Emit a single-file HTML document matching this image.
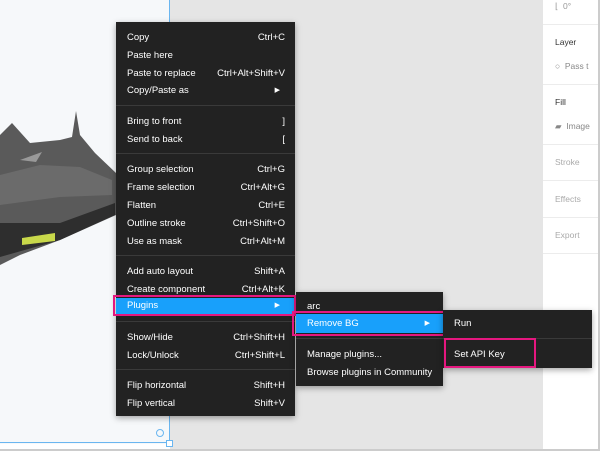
<!DOCTYPE html>
<html><head><style>
body{margin:0;width:600px;height:451px;overflow:hidden;font-family:"Liberation Sans",sans-serif;background:#fff;position:relative}
.abs{position:absolute}
.menu{position:absolute;background:#222;box-shadow:0 2px 6px rgba(0,0,0,.35);color:#fff;font-size:9.5px}
.it{position:absolute;left:11px;right:10px;height:16px;line-height:16px}
.it span{position:absolute;right:0;top:0}
.sep{position:absolute;left:0;right:0;height:1px;background:#3a3a3a}
.hl{background:#18a0fb}
.pink{position:absolute;border:2px solid #e5177f;box-sizing:border-box}
.rp{position:absolute;left:555px;font-size:8.5px}
.rs{position:absolute;left:543px;width:55px;height:1px;background:#ececec}
</style></head><body>
<div class="abs" style="left:0;top:0;width:170px;height:444px;background:#f6f8fa"></div>
<div class="abs" style="left:170px;top:0;width:373px;height:449px;background:#e5e5e5"></div>
<div class="abs" style="left:543px;top:0;width:55px;height:449px;background:#fff"></div>
<div class="abs" style="left:598px;top:0;width:2px;height:451px;background:#ccc"></div>
<div class="abs" style="left:0;top:449px;width:600px;height:2px;background:#ccc"></div>
<div class="abs" style="left:169px;top:0;width:1px;height:444px;background:#6ab6f0"></div>
<div class="abs" style="left:0;top:442px;width:170px;height:1px;background:#6ab6f0"></div>
<div class="abs" style="left:166px;top:440px;width:5px;height:5px;border:1px solid #6ab6f0;background:#fff"></div>
<div class="abs" style="left:156px;top:429px;width:6px;height:6px;border:1px solid #6ab6f0;border-radius:50%"></div>
<svg class="abs" style="left:0;top:105px" width="120" height="165">
<path d="M0 30 L12 18 L30 38 L60 35 L72 32 L76 6 L80 30 L95 48 L116 68 L116 110 L60 135 L20 150 L0 160 Z" fill="#5a5a5a"/>
<path d="M0 70 L40 60 L80 62 L112 75 L112 90 L60 92 L0 100Z" fill="#777" opacity=".6"/>
<path d="M0 118 L60 118 L115 98 L115 110 L60 135 L0 152Z" fill="#2e2e2e"/>
<path d="M22 133 L55 128 L55 136 L22 140Z" fill="#c8d84a"/>
<path d="M20 55 L42 47 L36 57Z" fill="#999"/>
</svg>
<!-- right panel -->
<div class="rs" style="top:24px"></div><div class="rs" style="top:84px"></div><div class="rs" style="top:144px"></div><div class="rs" style="top:180px"></div><div class="rs" style="top:217px"></div><div class="rs" style="top:253px"></div>
<div class="rp" style="top:1px;color:#999">⌊&nbsp; 0°</div>
<div class="rp" style="top:37px;color:#333">Layer</div>
<div class="rp" style="top:61px;color:#888">○&nbsp; Pass t</div>
<div class="rp" style="top:97px;color:#333">Fill</div>
<div class="rp" style="top:121px;color:#888">▰&nbsp; Image</div>
<div class="rp" style="top:157px;color:#aaa">Stroke</div>
<div class="rp" style="top:194px;color:#aaa">Effects</div>
<div class="rp" style="top:230px;color:#aaa">Export</div>
<!-- main menu -->
<div class="menu" style="left:116px;top:22px;width:179px;height:394px">
<div class="it" style="top:8px">Copy<span>Ctrl+C</span></div>
<div class="it" style="top:26px">Paste here</div>
<div class="it" style="top:44px">Paste to replace<span>Ctrl+Alt+Shift+V</span></div>
<div class="it" style="top:61px">Copy/Paste as<span style="right:5px;font-size:7px">▶</span></div>
<div class="sep" style="top:83px"></div>
<div class="it" style="top:92px">Bring to front<span>]</span></div>
<div class="it" style="top:110px">Send to back<span>[</span></div>
<div class="sep" style="top:131px"></div>
<div class="it" style="top:140px">Group selection<span>Ctrl+G</span></div>
<div class="it" style="top:158px">Frame selection<span>Ctrl+Alt+G</span></div>
<div class="it" style="top:176px">Flatten<span>Ctrl+E</span></div>
<div class="it" style="top:194px">Outline stroke<span>Ctrl+Shift+O</span></div>
<div class="it" style="top:212px">Use as mask<span>Ctrl+Alt+M</span></div>
<div class="sep" style="top:233px"></div>
<div class="it" style="top:242px">Add auto layout<span>Shift+A</span></div>
<div class="it" style="top:260px">Create component<span>Ctrl+Alt+K</span></div>
<div class="abs hl" style="left:0;right:0;top:276px;height:16px"></div>
<div class="it" style="top:276px">Plugins<span style="right:5px;font-size:7px">▶</span></div>
<div class="sep" style="top:299px"></div>
<div class="it" style="top:308px">Show/Hide<span>Ctrl+Shift+H</span></div>
<div class="it" style="top:326px">Lock/Unlock<span>Ctrl+Shift+L</span></div>
<div class="sep" style="top:347px"></div>
<div class="it" style="top:356px">Flip horizontal<span>Shift+H</span></div>
<div class="it" style="top:374px">Flip vertical<span>Shift+V</span></div>
</div>
<div class="pink" style="left:113px;top:295px;width:183px;height:21px"></div>
<!-- submenu 1 -->
<div class="menu" style="left:296px;top:292px;width:147px;height:94px">
<div class="it" style="top:7px">arc</div>
<div class="abs hl" style="left:0;right:0;top:22px;height:19px"></div>
<div class="it" style="top:24px">Remove BG<span style="right:3px;font-size:7px">▶</span></div>
<div class="sep" style="top:46px"></div>
<div class="it" style="top:55px">Manage plugins...</div>
<div class="it" style="top:73px">Browse plugins in Community</div>
</div>
<div class="pink" style="left:292px;top:311px;width:155px;height:25px"></div>
<!-- submenu 2 -->
<div class="menu" style="left:443px;top:310px;width:149px;height:58px">
<div class="it" style="top:6px">Run</div>
<div class="sep" style="top:28px"></div>
<div class="it" style="top:37px">Set API Key</div>
</div>
<div class="pink" style="left:444px;top:338px;width:92px;height:30px"></div>
</body></html>
